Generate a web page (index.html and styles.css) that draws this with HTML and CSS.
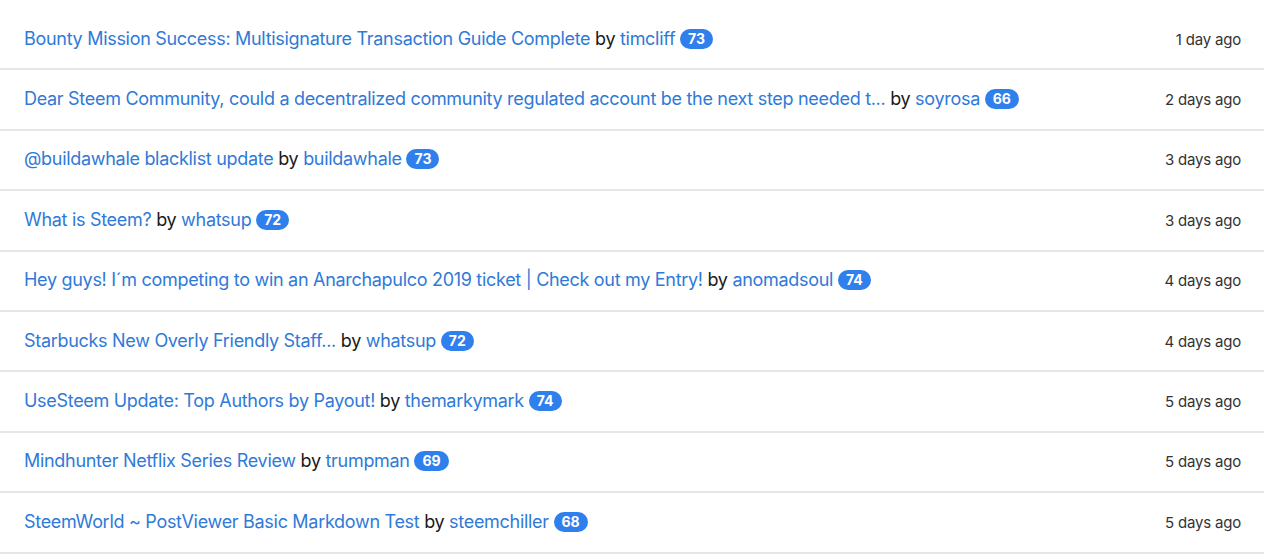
FILE: index.html
```html
<!DOCTYPE html>
<html lang="en">

<head>
  <meta charset="UTF-8">
  <meta name="viewport" content="width=device-width, initial-scale=1.0">
  <title>Recent Posts</title>
  <link rel="stylesheet" href="styles.css">
</head>

<body>
  <ul class="post-list">
    <li class="post">
      <div class="post-info">
        <a href="#" class="post-title">Bounty Mission Success: Multisignature Transaction Guide Complete</a>
        by <a href="#" class="post-author">timcliff</a> <span class="rep">73</span>
      </div>
      <span class="post-date">1 day ago</span>
    </li>
    <li class="post">
      <div class="post-info">
        <a href="#" class="post-title">Dear Steem Community, could a decentralized community regulated account be the next step needed t...</a>
        by <a href="#" class="post-author">soyrosa</a> <span class="rep">66</span>
      </div>
      <span class="post-date">2 days ago</span>
    </li>
    <li class="post">
      <div class="post-info">
        <a href="#" class="post-title">@buildawhale blacklist update</a>
        by <a href="#" class="post-author">buildawhale</a> <span class="rep">73</span>
      </div>
      <span class="post-date">3 days ago</span>
    </li>
    <li class="post">
      <div class="post-info">
        <a href="#" class="post-title">What is Steem?</a>
        by <a href="#" class="post-author">whatsup</a> <span class="rep">72</span>
      </div>
      <span class="post-date">3 days ago</span>
    </li>
    <li class="post">
      <div class="post-info">
        <a href="#" class="post-title">Hey guys! I´m competing to win an Anarchapulco 2019 ticket | Check out my Entry!</a>
        by <a href="#" class="post-author">anomadsoul</a> <span class="rep">74</span>
      </div>
      <span class="post-date">4 days ago</span>
    </li>
    <li class="post">
      <div class="post-info">
        <a href="#" class="post-title">Starbucks New Overly Friendly Staff...</a>
        by <a href="#" class="post-author">whatsup</a> <span class="rep">72</span>
      </div>
      <span class="post-date">4 days ago</span>
    </li>
    <li class="post">
      <div class="post-info">
        <a href="#" class="post-title">UseSteem Update: Top Authors by Payout!</a>
        by <a href="#" class="post-author">themarkymark</a> <span class="rep">74</span>
      </div>
      <span class="post-date">5 days ago</span>
    </li>
    <li class="post">
      <div class="post-info">
        <a href="#" class="post-title">Mindhunter Netflix Series Review</a>
        by <a href="#" class="post-author">trumpman</a> <span class="rep">69</span>
      </div>
      <span class="post-date">5 days ago</span>
    </li>
    <li class="post">
      <div class="post-info">
        <a href="#" class="post-title">SteemWorld ~ PostViewer Basic Markdown Test</a>
        by <a href="#" class="post-author">steemchiller</a> <span class="rep">68</span>
      </div>
      <span class="post-date">5 days ago</span>
    </li>
  </ul>
</body>

</html>
```

FILE: styles.css
```css
/* Global Styles */
body {
  font-family: 'Inter', 'Liberation Sans', sans-serif;
  background: #ffffff;
  color: #1a1a1a;
  margin: 0;
  padding: 10px 16px 0 0;
}

a {
  color: #2f7ad8;
  text-decoration: none;
}

/* Post List */
.post-list {
  list-style: none;
  margin: 0;
  padding: 0;
}

.post {
  display: flex;
  justify-content: space-between;
  align-items: center;
  height: 58.4px;
  padding: 0 23px 0 24px;
  border-bottom: 2px solid #e6e6e6;
}

.post-info {
  font-size: 18px;
  letter-spacing: -0.3px;
  margin-top: -2px;
}

.rep {
  display: inline-block;
  background: #2f80ed;
  color: #ffffff;
  font-size: 14px;
  font-weight: 700;
  letter-spacing: 0;
  line-height: 20px;
  padding: 0 8px;
  border-radius: 10px;
  vertical-align: 1px;
}

.post-date {
  font-size: 15px;
  letter-spacing: -0.2px;
  color: #333333;
}
```
